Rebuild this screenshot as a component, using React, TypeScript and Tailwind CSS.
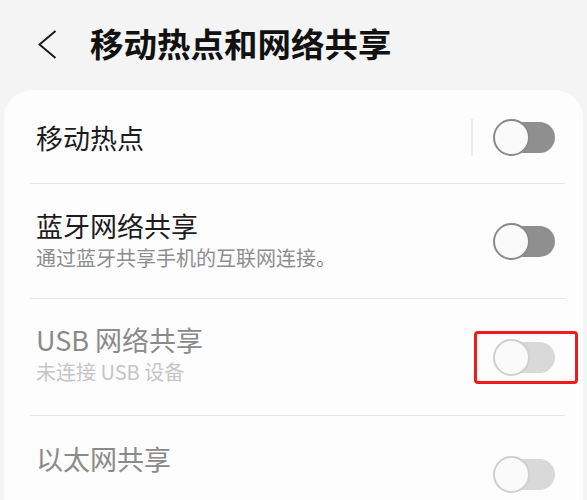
import React from "react";

function Toggle({ disabled = false, highlight = false }: { disabled?: boolean; highlight?: boolean }) {
  return (
    <div className="relative h-[37px] w-[62px] shrink-0">
      <div
        className={
          "absolute left-[7px] right-0 top-[3px] h-[31px] rounded-full " +
          (disabled ? "bg-[#d9d9d9]" : "bg-[#8f8f8f]")
        }
      />
      <div
        className={
          "absolute left-0 top-0 h-[37px] w-[37px] rounded-full border-2 bg-[#fafafa] " +
          (disabled ? "border-[#cfcfcf]" : "border-[#8a8a8a]")
        }
      />
      {highlight && (
        <div className="absolute -left-[19px] -right-[23px] -top-[8px] -bottom-[8px] rounded-[4px] border-[3px] border-[#ee1c1c]" />
      )}
    </div>
  );
}

function Divider() {
  return <div className="ml-[26px] mr-[18px] h-px bg-[#e6e6e6]" />;
}

export default function App() {
  const font = { fontFamily: '"Noto Sans CJK SC", "Noto Sans", sans-serif' };
  return (
    <div className="h-[500px] w-[587px] overflow-hidden bg-[#f4f4f4]" style={font}>
      <div className="flex h-[90px] items-center pl-[38px]">
        <svg width="19" height="29" viewBox="0 0 19 29" className="mt-[-2px]">
          <polyline points="17.5,1 1.5,14.5 17.5,28" fill="none" stroke="#1a1a1a" strokeWidth="2" strokeLinejoin="miter" />
        </svg>
        <div className="ml-[33px] text-[33.5px] font-bold leading-[40px] text-[#111111] mt-[-4px]">
          移动热点和网络共享
        </div>
      </div>
      <div className="mx-[4px] rounded-t-[28px] bg-[#fdfdfd] pb-[40px]">
        <div className="flex h-[93px] items-center pl-[32px] pr-[28px] pt-[2px]">
          <div className="flex-1 text-[27px] leading-[34px] text-[#1c1c1c]">移动热点</div>
          <div className="mr-[20px] h-[37px] w-[2px] bg-[#ececec]" />
          <Toggle />
        </div>
        <Divider />
        <div className="flex h-[114px] items-center pl-[32px] pr-[28px]">
          <div className="flex-1">
            <div className="text-[27px] leading-[34px] text-[#1c1c1c]">蓝牙网络共享</div>
            <div className="text-[20px] leading-[30px] text-[#8d8d8d]">通过蓝牙共享手机的互联网连接。</div>
          </div>
          <Toggle />
        </div>
        <Divider />
        <div className="flex h-[116px] items-center pl-[32px] pr-[28px]">
          <div className="flex-1 mt-[-4px]">
            <div className="text-[27px] leading-[34px] text-[#8a8a8a]">USB 网络共享</div>
            <div className="text-[20px] leading-[30px] text-[#c6c6c6]">未连接 USB 设备</div>
          </div>
          <Toggle disabled highlight />
        </div>
        <Divider />
        <div className="flex h-[116px] items-center pl-[32px] pr-[28px]">
          <div className="flex-1">
            <div className="text-[27px] leading-[34px] text-[#8a8a8a]">以太网共享</div>
            <div className="h-[30px]" />
          </div>
          <Toggle disabled />
        </div>
      </div>
    </div>
  );
}
